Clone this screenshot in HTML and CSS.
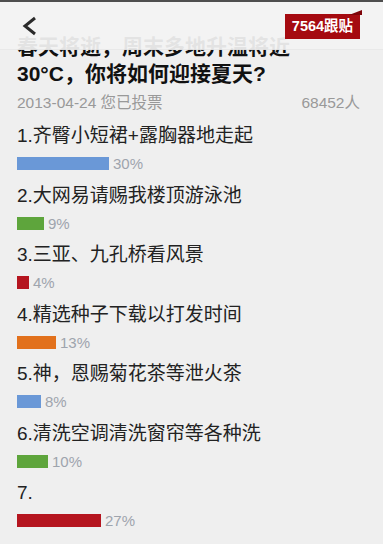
FILE: index.html
```html
<!DOCTYPE html>
<html lang="zh">
<head>
<meta charset="utf-8">
<title>投票</title>
<link rel="stylesheet" href="styles.css">
</head>
<body>
<div class="page">
  <header class="topbar">
    <svg class="back" width="16" height="20" viewBox="0 0 16 20"><polyline points="13,2 3,10 13,18" fill="none" stroke="#2a2a2a" stroke-width="3"/></svg>
    <div class="badge">7564跟贴</div>
  </header>
  <main class="content">
    <h1 class="title">春天将逝，周末多地升温将近30°C，你将如何迎接夏天?</h1>
    <div class="meta"><span>2013-04-24 您已投票</span><span>68452人</span></div>
    <ul class="options">
      <li class="option"><div class="label">1.齐臀小短裙+露胸器地走起</div><div class="bar-row"><span class="bar blue" style="width:92px"></span><span class="pct">30%</span></div></li>
      <li class="option"><div class="label">2.大网易请赐我楼顶游泳池</div><div class="bar-row"><span class="bar green" style="width:27px"></span><span class="pct">9%</span></div></li>
      <li class="option"><div class="label">3.三亚、九孔桥看风景</div><div class="bar-row"><span class="bar red" style="width:12px"></span><span class="pct">4%</span></div></li>
      <li class="option"><div class="label">4.精选种子下载以打发时间</div><div class="bar-row"><span class="bar orange" style="width:39px"></span><span class="pct">13%</span></div></li>
      <li class="option"><div class="label">5.神，恩赐菊花茶等泄火茶</div><div class="bar-row"><span class="bar blue" style="width:24px"></span><span class="pct">8%</span></div></li>
      <li class="option"><div class="label">6.清洗空调清洗窗帘等各种洗</div><div class="bar-row"><span class="bar green" style="width:31px"></span><span class="pct">10%</span></div></li>
      <li class="option"><div class="label">7.</div><div class="bar-row"><span class="bar red" style="width:84px"></span><span class="pct">27%</span></div></li>
    </ul>
  </main>
</div>
</body>
</html>
```
FILE: styles.css
```css
html, body {
  margin: 0;
  padding: 0;
  background: #efefef;
}
body {
  font-family: "Liberation Sans", Arial, "Noto Sans CJK SC", sans-serif;
  color: #222;
}
.page {
  position: relative;
  width: 383px;
  height: 544px;
  overflow: hidden;
}
.topbar {
  position: absolute;
  top: 0;
  left: 0;
  right: 0;
  height: 47px;
  border-top: 2px solid #4e4e4e;
  border-bottom: 1px solid rgba(0, 0, 0, 0.04);
  background: rgba(243, 243, 243, 0.93);
  z-index: 2;
}
.back {
  position: absolute;
  left: 22px;
  top: 14px;
}
.badge {
  position: absolute;
  left: 285px;
  top: 12px;
  width: 75px;
  height: 25px;
  line-height: 25px;
  background: #a50a10;
  color: #fff;
  font-size: 14.5px;
  font-weight: bold;
  text-align: center;
}
.badge::after {
  content: "";
  position: absolute;
  right: -2px;
  top: -4px;
  width: 13px;
  height: 5px;
  background: #7e0308;
  clip-path: polygon(0 100%, 100% 0, 100% 100%);
}
.content {
  padding: 33px 23px 0 17px;
}
.title {
  margin: 0;
  max-width: 300px;
  font-size: 21px;
  line-height: 27px;
  font-weight: bold;
  color: #111;
}
.meta {
  margin-top: 5px;
  display: flex;
  justify-content: space-between;
  font-size: 15.5px;
  line-height: 22px;
  color: #999;
}
.options {
  list-style: none;
  margin: 9px 0 0;
  padding: 0;
}
.option {
  margin-bottom: 9.5px;
}
.label {
  font-size: 19px;
  line-height: 26px;
  color: #222;
  white-space: nowrap;
}
.bar-row {
  margin-top: 5px;
  height: 19px;
  display: flex;
  align-items: center;
}
.bar {
  display: block;
  height: 13px;
}
.blue { background: #6a98d7; }
.green { background: #5ea53c; }
.red { background: #b5151f; }
.orange { background: #e2711c; }
.pct {
  margin-left: 4px;
  font-size: 15px;
  line-height: 19px;
  color: #9ea4ad;
}
```
